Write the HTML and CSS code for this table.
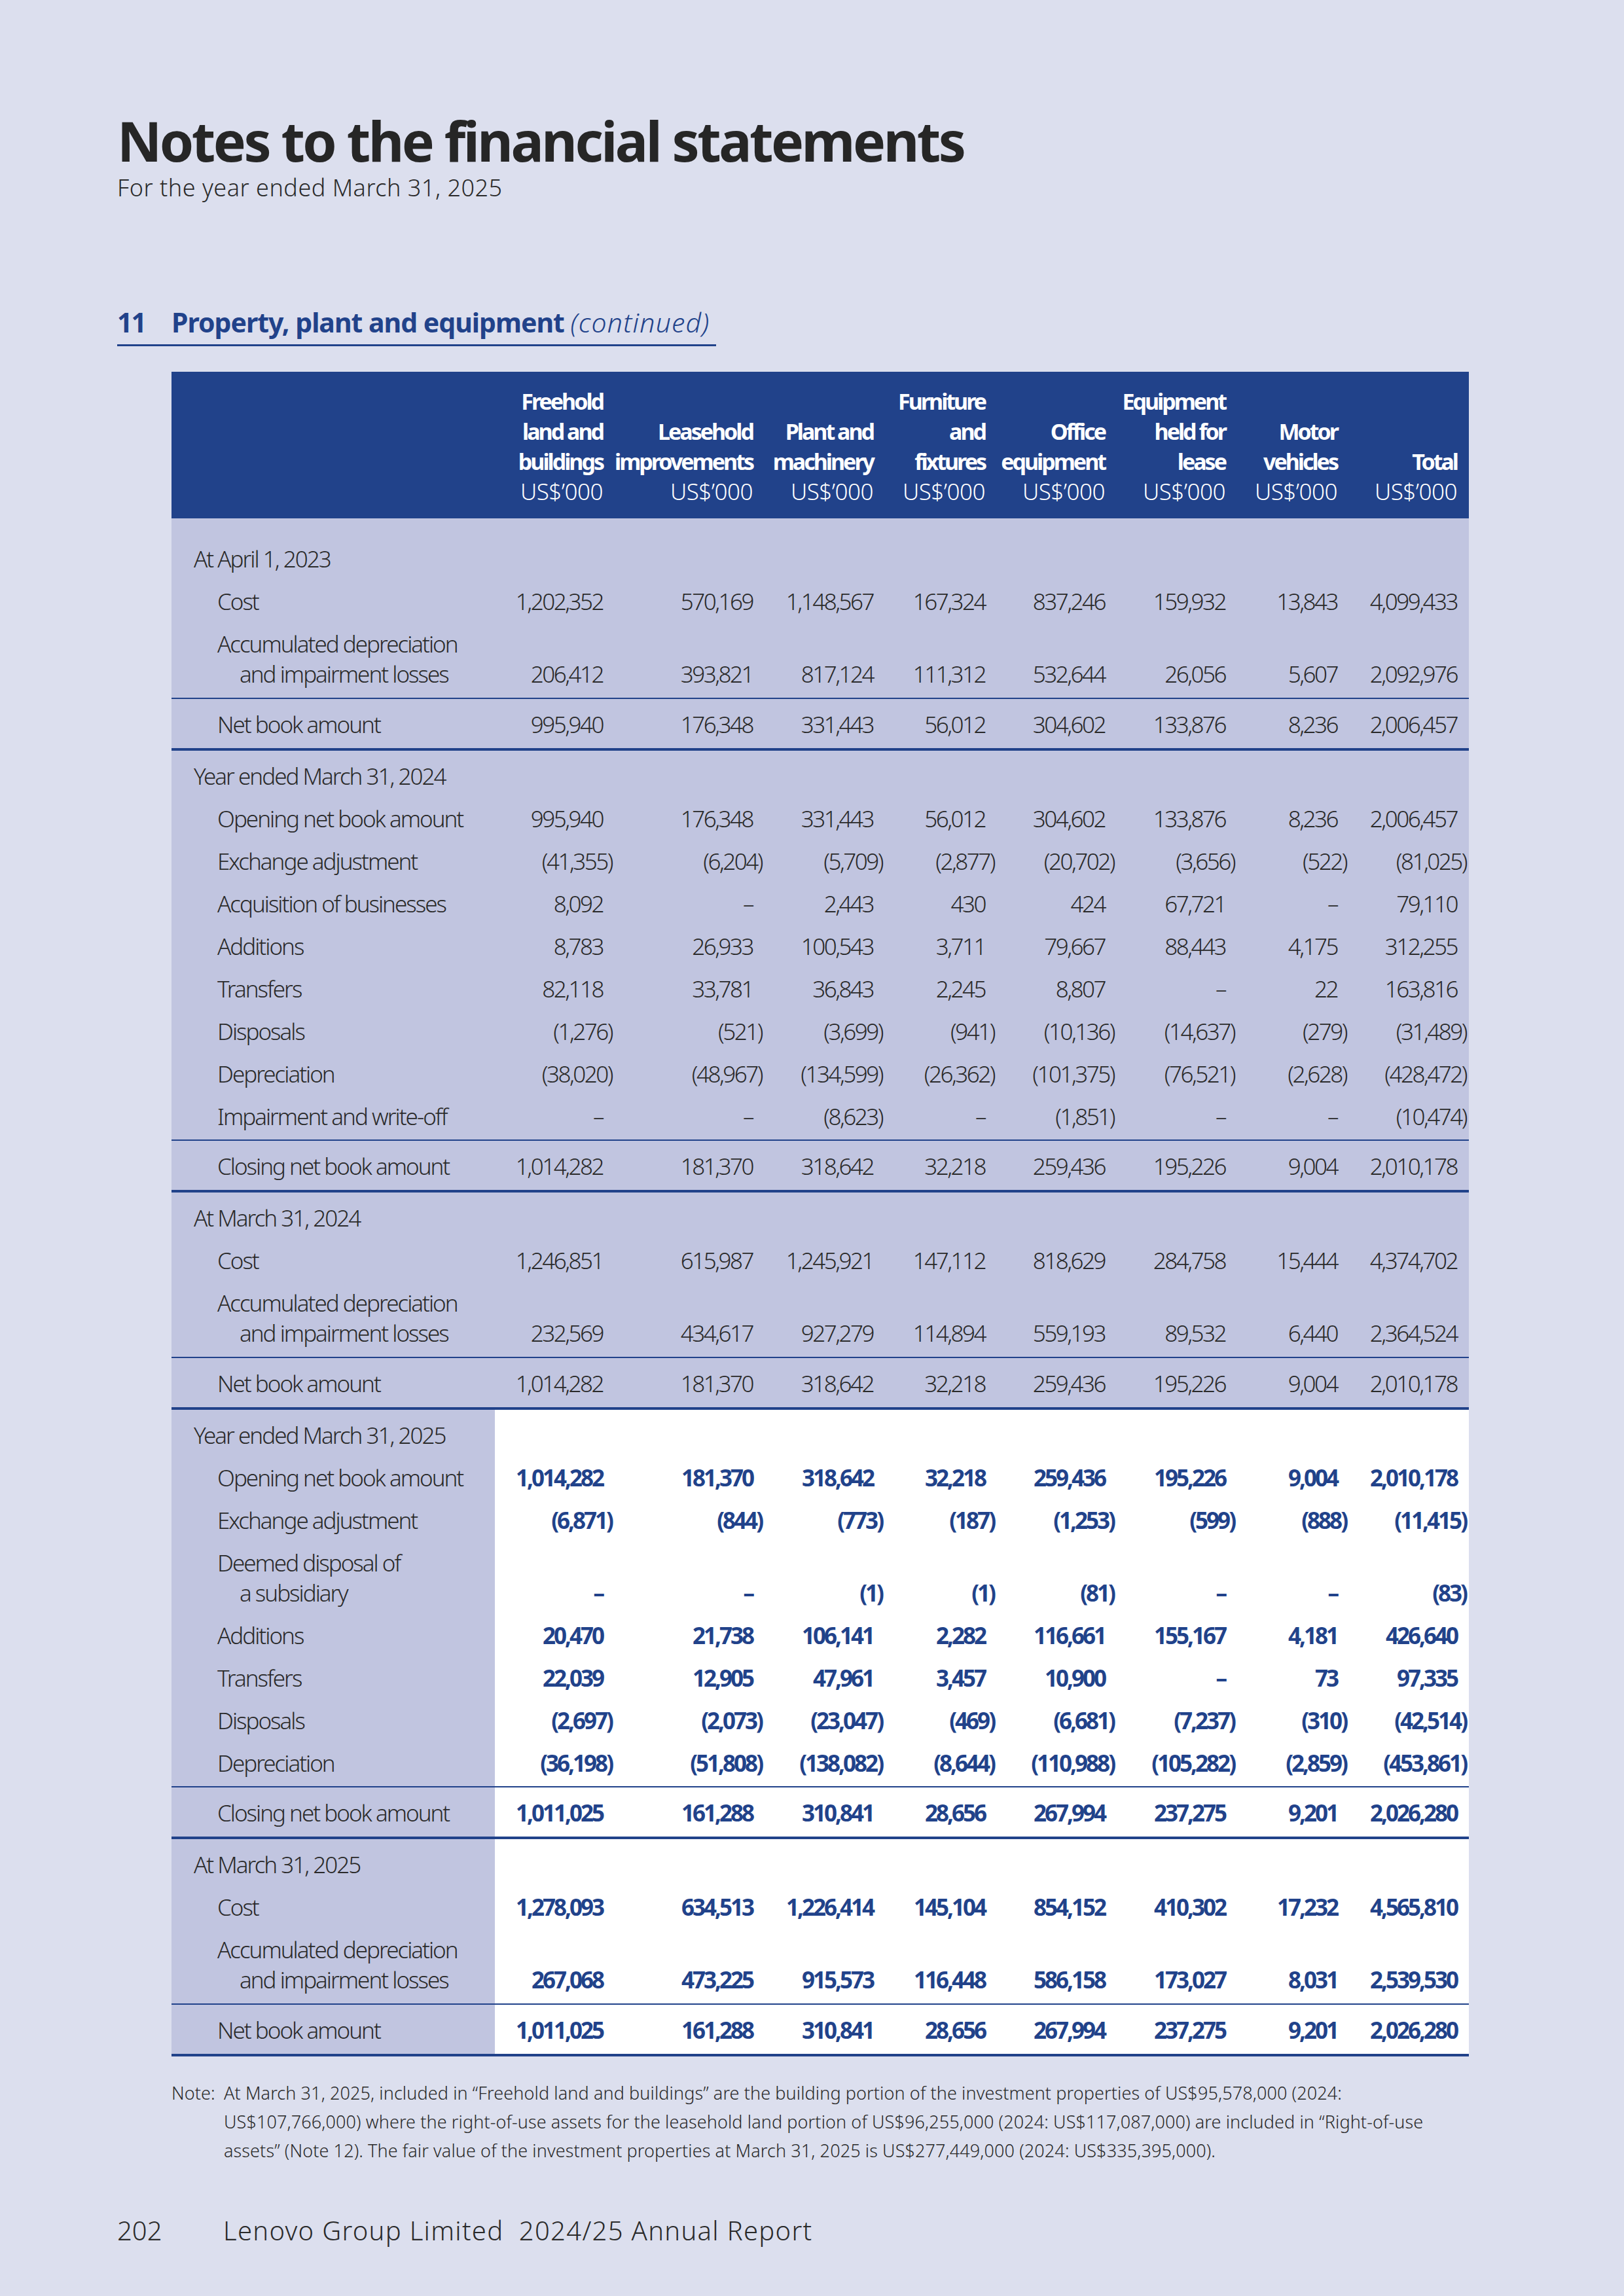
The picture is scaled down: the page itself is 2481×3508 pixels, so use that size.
FILE: index.html
```html
<!DOCTYPE html>
<html lang="en">
<head>
  <meta charset="UTF-8">
  <title>Notes to the financial statements – Property, plant and equipment</title>
  <link rel="stylesheet" href="styles.css">
</head>
<body>
  <!-- Page heading -->
  <h1 class="title">Notes to the financial statements</h1>
  <p class="subtitle">For the year ended March 31, 2025</p>

  <h2 class="section"><span class="sec-no">11</span><span class="sec-name">Property, plant and equipment <em>(continued)</em></span></h2>

  <!-- PP&E movement table -->
  <table class="ppe">
    <colgroup>
      <col class="c-label">
      <col style="width:183px"><col style="width:229px"><col style="width:184px"><col style="width:171px">
      <col style="width:183px"><col style="width:184px"><col style="width:171px"><col style="width:183px">
    </colgroup>
    <thead>
      <tr>
        <th></th>
        <th>Freehold<br>land and<br>buildings<br><span class="unit">US$’000</span></th>
        <th>Leasehold<br>improvements<br><span class="unit">US$’000</span></th>
        <th>Plant and<br>machinery<br><span class="unit">US$’000</span></th>
        <th>Furniture<br>and<br>fixtures<br><span class="unit">US$’000</span></th>
        <th>Office<br>equipment<br><span class="unit">US$’000</span></th>
        <th>Equipment<br>held for<br>lease<br><span class="unit">US$’000</span></th>
        <th>Motor<br>vehicles<br><span class="unit">US$’000</span></th>
        <th>Total<br><span class="unit">US$’000</span></th>
      </tr>
    </thead>

    <tbody>
      <tr class="first">
        <td class="lbl head">At April 1, 2023</td>
        <td></td><td></td><td></td><td></td><td></td><td></td><td></td><td></td>
      </tr>
      <tr>
        <td class="lbl">Cost</td>
        <td>1,202,352</td><td>570,169</td><td>1,148,567</td><td>167,324</td><td>837,246</td><td>159,932</td><td>13,843</td><td>4,099,433</td>
      </tr>
      <tr class="pre">
        <td class="lbl">Accumulated depreciation<span class="cont">and impairment losses</span></td>
        <td>206,412</td><td>393,821</td><td>817,124</td><td>111,312</td><td>532,644</td><td>26,056</td><td>5,607</td><td>2,092,976</td>
      </tr>
      <tr class="total">
        <td class="lbl">Net book amount</td>
        <td>995,940</td><td>176,348</td><td>331,443</td><td>56,012</td><td>304,602</td><td>133,876</td><td>8,236</td><td>2,006,457</td>
      </tr>
    </tbody>

    <tbody>
      <tr class="sec">
        <td class="lbl head">Year ended March 31, 2024</td>
        <td></td><td></td><td></td><td></td><td></td><td></td><td></td><td></td>
      </tr>
      <tr>
        <td class="lbl">Opening net book amount</td>
        <td>995,940</td><td>176,348</td><td>331,443</td><td>56,012</td><td>304,602</td><td>133,876</td><td>8,236</td><td>2,006,457</td>
      </tr>
      <tr>
        <td class="lbl">Exchange adjustment</td>
        <td class="neg">(41,355)</td><td class="neg">(6,204)</td><td class="neg">(5,709)</td><td class="neg">(2,877)</td><td class="neg">(20,702)</td><td class="neg">(3,656)</td><td class="neg">(522)</td><td class="neg">(81,025)</td>
      </tr>
      <tr>
        <td class="lbl">Acquisition of businesses</td>
        <td>8,092</td><td>–</td><td>2,443</td><td>430</td><td>424</td><td>67,721</td><td>–</td><td>79,110</td>
      </tr>
      <tr>
        <td class="lbl">Additions</td>
        <td>8,783</td><td>26,933</td><td>100,543</td><td>3,711</td><td>79,667</td><td>88,443</td><td>4,175</td><td>312,255</td>
      </tr>
      <tr>
        <td class="lbl">Transfers</td>
        <td>82,118</td><td>33,781</td><td>36,843</td><td>2,245</td><td>8,807</td><td>–</td><td>22</td><td>163,816</td>
      </tr>
      <tr>
        <td class="lbl">Disposals</td>
        <td class="neg">(1,276)</td><td class="neg">(521)</td><td class="neg">(3,699)</td><td class="neg">(941)</td><td class="neg">(10,136)</td><td class="neg">(14,637)</td><td class="neg">(279)</td><td class="neg">(31,489)</td>
      </tr>
      <tr>
        <td class="lbl">Depreciation</td>
        <td class="neg">(38,020)</td><td class="neg">(48,967)</td><td class="neg">(134,599)</td><td class="neg">(26,362)</td><td class="neg">(101,375)</td><td class="neg">(76,521)</td><td class="neg">(2,628)</td><td class="neg">(428,472)</td>
      </tr>
      <tr class="pre">
        <td class="lbl">Impairment and write-off</td>
        <td>–</td><td>–</td><td class="neg">(8,623)</td><td>–</td><td class="neg">(1,851)</td><td>–</td><td>–</td><td class="neg">(10,474)</td>
      </tr>
      <tr class="total">
        <td class="lbl">Closing net book amount</td>
        <td>1,014,282</td><td>181,370</td><td>318,642</td><td>32,218</td><td>259,436</td><td>195,226</td><td>9,004</td><td>2,010,178</td>
      </tr>
    </tbody>

    <tbody>
      <tr class="sec">
        <td class="lbl head">At March 31, 2024</td>
        <td></td><td></td><td></td><td></td><td></td><td></td><td></td><td></td>
      </tr>
      <tr>
        <td class="lbl">Cost</td>
        <td>1,246,851</td><td>615,987</td><td>1,245,921</td><td>147,112</td><td>818,629</td><td>284,758</td><td>15,444</td><td>4,374,702</td>
      </tr>
      <tr class="pre">
        <td class="lbl">Accumulated depreciation<span class="cont">and impairment losses</span></td>
        <td>232,569</td><td>434,617</td><td>927,279</td><td>114,894</td><td>559,193</td><td>89,532</td><td>6,440</td><td>2,364,524</td>
      </tr>
      <tr class="total">
        <td class="lbl">Net book amount</td>
        <td>1,014,282</td><td>181,370</td><td>318,642</td><td>32,218</td><td>259,436</td><td>195,226</td><td>9,004</td><td>2,010,178</td>
      </tr>
    </tbody>

    <!-- current year figures -->
    <tbody class="cur">
      <tr class="sec">
        <td class="lbl head">Year ended March 31, 2025</td>
        <td></td><td></td><td></td><td></td><td></td><td></td><td></td><td></td>
      </tr>
      <tr>
        <td class="lbl">Opening net book amount</td>
        <td>1,014,282</td><td>181,370</td><td>318,642</td><td>32,218</td><td>259,436</td><td>195,226</td><td>9,004</td><td>2,010,178</td>
      </tr>
      <tr>
        <td class="lbl">Exchange adjustment</td>
        <td class="neg">(6,871)</td><td class="neg">(844)</td><td class="neg">(773)</td><td class="neg">(187)</td><td class="neg">(1,253)</td><td class="neg">(599)</td><td class="neg">(888)</td><td class="neg">(11,415)</td>
      </tr>
      <tr>
        <td class="lbl">Deemed disposal of<span class="cont">a subsidiary</span></td>
        <td>–</td><td>–</td><td class="neg">(1)</td><td class="neg">(1)</td><td class="neg">(81)</td><td>–</td><td>–</td><td class="neg">(83)</td>
      </tr>
      <tr>
        <td class="lbl">Additions</td>
        <td>20,470</td><td>21,738</td><td>106,141</td><td>2,282</td><td>116,661</td><td>155,167</td><td>4,181</td><td>426,640</td>
      </tr>
      <tr>
        <td class="lbl">Transfers</td>
        <td>22,039</td><td>12,905</td><td>47,961</td><td>3,457</td><td>10,900</td><td>–</td><td>73</td><td>97,335</td>
      </tr>
      <tr>
        <td class="lbl">Disposals</td>
        <td class="neg">(2,697)</td><td class="neg">(2,073)</td><td class="neg">(23,047)</td><td class="neg">(469)</td><td class="neg">(6,681)</td><td class="neg">(7,237)</td><td class="neg">(310)</td><td class="neg">(42,514)</td>
      </tr>
      <tr class="pre">
        <td class="lbl">Depreciation</td>
        <td class="neg">(36,198)</td><td class="neg">(51,808)</td><td class="neg">(138,082)</td><td class="neg">(8,644)</td><td class="neg">(110,988)</td><td class="neg">(105,282)</td><td class="neg">(2,859)</td><td class="neg">(453,861)</td>
      </tr>
      <tr class="total">
        <td class="lbl">Closing net book amount</td>
        <td>1,011,025</td><td>161,288</td><td>310,841</td><td>28,656</td><td>267,994</td><td>237,275</td><td>9,201</td><td>2,026,280</td>
      </tr>
    </tbody>

    <tbody class="cur">
      <tr class="sec">
        <td class="lbl head">At March 31, 2025</td>
        <td></td><td></td><td></td><td></td><td></td><td></td><td></td><td></td>
      </tr>
      <tr>
        <td class="lbl">Cost</td>
        <td>1,278,093</td><td>634,513</td><td>1,226,414</td><td>145,104</td><td>854,152</td><td>410,302</td><td>17,232</td><td>4,565,810</td>
      </tr>
      <tr class="pre">
        <td class="lbl">Accumulated depreciation<span class="cont">and impairment losses</span></td>
        <td>267,068</td><td>473,225</td><td>915,573</td><td>116,448</td><td>586,158</td><td>173,027</td><td>8,031</td><td>2,539,530</td>
      </tr>
      <tr class="total">
        <td class="lbl">Net book amount</td>
        <td>1,011,025</td><td>161,288</td><td>310,841</td><td>28,656</td><td>267,994</td><td>237,275</td><td>9,201</td><td>2,026,280</td>
      </tr>
    </tbody>
  </table>

  <!-- Footnote -->
  <div class="note">
    <span class="note-tag">Note:</span>
    <p>At March 31, 2025, included in “Freehold land and buildings” are the building portion of the investment properties of US$95,578,000 (2024:<br>US$107,766,000) where the right-of-use assets for the leasehold land portion of US$96,255,000 (2024: US$117,087,000) are included in “Right-of-use<br>assets” (Note 12). The fair value of the investment properties at March 31, 2025 is US$277,449,000 (2024: US$335,395,000).</p>
  </div>

  <!-- Page footer -->
  <div class="foot">
    <span class="page-no">202</span>
    <span class="report">Lenovo Group Limited&nbsp; 2024/25 Annual Report</span>
  </div>
</body>
</html>
```

FILE: styles.css
```css
:root {
  --page: #dcdfee;
  --cell: #c1c5e0;
  --blue: #21428a;
  --ink: #2a2a2a;
  --font: "Noto Sans", Roboto, sans-serif;
}
* {box-sizing: border-box; margin: 0; padding: 0;}
html {background: var(--page);}
body {
  font-family: var(--font);
  color: var(--ink);
  width: 2481px;
  min-height: 3508px;
  padding: 173px 0 0 179px;
}

/* Page heading */
.title {
  font-size: 84px;
  line-height: 84px;
  font-weight: 700;
  letter-spacing: -3.5px;
  color: #262626;
}
.subtitle {
  margin-top: 10px;
  font-size: 36px;
  line-height: 40px;
  font-weight: 300;
  letter-spacing: 0.5px;
}

/* Section heading */
.section {
  display: flex;
  align-items: baseline;
  width: 915px;
  margin-top: 161px;
  padding-bottom: 10px;
  border-bottom: 3px solid var(--blue);
  font-size: 41px;
  line-height: 48px;
  font-weight: 700;
  color: var(--blue);
  white-space: nowrap;
}
.sec-no {width: 83px; letter-spacing: -2px;}
.sec-name {letter-spacing: -1px;}
.sec-name em {font-weight: 300; font-style: italic; letter-spacing: 1.2px;}

/* Table */
.ppe {
  width: 1982px;
  margin: 39px 0 0 83px;
  table-layout: fixed;
  border-collapse: collapse;
}
.ppe .c-label {width: 494px;}
.ppe th {
  background: var(--blue);
  color: #fff;
  font-size: 34px;
  line-height: 46px;
  font-weight: 700;
  letter-spacing: -3px;
  text-align: right;
  vertical-align: bottom;
  white-space: nowrap;
  padding: 22px 18px 18px 0;
}
.ppe th .unit {font-weight: 300; font-size: 35px; letter-spacing: -0.5px;}
.ppe td {
  background: var(--cell);
  font-size: 35px;
  line-height: 46px;
  font-weight: 300;
  letter-spacing: -2.5px;
  text-align: right;
  vertical-align: bottom;
  white-space: nowrap;
  padding: 9.5px 18px 9.5px 0;
}
.ppe td.neg {padding-right: 4px;}
.ppe td.lbl {text-align: left; padding-left: 70px; letter-spacing: -2px;}
.ppe td.head {padding-left: 34px;}
.ppe .cont {display: block; padding-left: 34px;}

.ppe tr.first td {padding-top: 39px;}
.ppe tr.sec td {padding-top: 16px;}
.ppe tr.pre td {padding-bottom: 12.5px;}
.ppe tr.total td {
  padding-top: 16px;
  padding-bottom: 13px;
  border-top: 2px solid var(--blue);
  border-bottom: 4px solid var(--blue);
}

/* Current year columns */
.ppe tbody.cur td:not(.lbl) {
  background: #fff;
  color: var(--blue);
  font-weight: 700;
  letter-spacing: -3px;
}

/* Footnote */
.note {
  display: flex;
  width: 2065px;
  margin: 34px 0 0 83px;
  font-size: 27px;
  line-height: 44px;
  font-weight: 300;
  letter-spacing: 0.1px;
  white-space: nowrap;
}
.note-tag {width: 80px; flex: none;}

/* Footer */
.foot {
  display: flex;
  margin-top: 77px;
  font-size: 40px;
  line-height: 46px;
  font-weight: 300;
}
.page-no {width: 162px;}
.report {letter-spacing: 1.3px;}
```
